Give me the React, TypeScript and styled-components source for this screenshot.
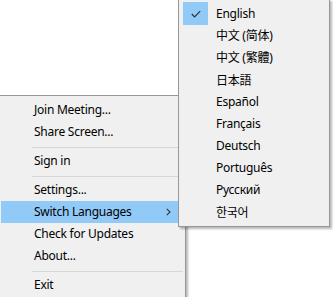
import React from "react";
import styled, { createGlobalStyle } from "styled-components";

const Global = createGlobalStyle`
  html, body { margin: 0; padding: 0; background: #ffffff; }
  body { font-family: "Noto Sans", "Noto Sans CJK SC", sans-serif; }
`;

const Stage = styled.div`
  position: relative;
  width: 336px;
  height: 297px;
  overflow: hidden;
  background: #ffffff;
`;

const Menu = styled.div<{ $left: number; $top: number; $width: number; $z: number }>`
  position: absolute;
  left: ${(p) => p.$left}px;
  top: ${(p) => p.$top}px;
  width: ${(p) => p.$width}px;
  z-index: ${(p) => p.$z};
  box-sizing: border-box;
  background: #f0f0f0;
  border: 1px solid #979797;
  padding: 3px 2px;
  display: flex;
  flex-direction: column;
  box-shadow: 2px 2px 2px rgba(0, 0, 0, 0.28);
`;

const Item = styled.div<{ $active?: boolean; $indent: number }>`
  height: 22px;
  display: flex;
  align-items: center;
  position: relative;
  padding-left: ${(p) => p.$indent}px;
  background: ${(p) => (p.$active ? "#91c9f7" : "transparent")};
  font-size: 12px;
  color: #000;
  white-space: nowrap;
`;

const Label = styled.span<{ $font?: string }>`
  font-family: ${(p) => p.$font ?? `"Noto Sans", sans-serif`};
  line-height: 22px;
  letter-spacing: -0.25px;
`;

const Arrow = styled.svg`
  position: absolute;
  right: 12px;
  top: 7px;
`;

const CheckBox = styled.div`
  position: absolute;
  left: 2px;
  top: -1px;
  width: 25px;
  height: 23px;
  background: #91c9f7;
  display: flex;
  align-items: center;
  justify-content: center;
`;

const Separator = styled.div`
  height: 7px;
  display: flex;
  align-items: flex-start;
  padding-top: 4px;
  box-sizing: border-box;
  padding-left: 31px;
  &::after {
    content: "";
    display: block;
    flex: 1;
    height: 1px;
    background: #d7d7d7;
  }
`;

type MainEntry = { sep: true } | { label: string; active?: boolean; sub?: boolean };

const mainItems: MainEntry[] = [
  { label: "Join Meeting..." },
  { label: "Share Screen..." },
  { sep: true },
  { label: "Sign in" },
  { sep: true },
  { label: "Settings..." },
  { label: "Switch Languages", active: true, sub: true },
  { label: "Check for Updates" },
  { label: "About..." },
  { sep: true },
  { label: "Exit" },
];

const cjkJP = `"Noto Sans CJK JP", "Noto Sans", sans-serif`;
const cjkKR = `"Noto Sans CJK KR", "Noto Sans", sans-serif`;

const langs: { label: string; font?: string; checked?: boolean }[] = [
  { label: "English", checked: true },
  { label: "中文 (简体)", font: `"Noto Sans", "Noto Sans CJK SC", sans-serif` },
  { label: "中文 (繁體)", font: `"Noto Sans", "Noto Sans CJK TC", sans-serif` },
  { label: "日本語", font: cjkJP },
  { label: "Español" },
  { label: "Français" },
  { label: "Deutsch" },
  { label: "Português" },
  { label: "Русский" },
  { label: "한국어", font: cjkKR },
];

export default function App() {
  return (
    <Stage>
      <Global />
      <Menu $left={-2} $top={95} $width={188} $z={1}>
        {mainItems.map((it, i) =>
          "sep" in it ? (
            <Separator key={i} />
          ) : (
            <Item key={i} $active={it.active} $indent={33}>
              <Label>{it.label}</Label>
              {it.sub && (
                <Arrow width="5" height="8" viewBox="0 0 5 8">
                  <path d="M0.8 0.8 L4 4 L0.8 7.2" fill="none" stroke="#333" strokeWidth="1.1" />
                </Arrow>
              )}
            </Item>
          )
        )}
      </Menu>
      <Menu $left={178} $top={-1} $width={152} $z={2}>
        {langs.map((l, i) => (
          <Item key={i} $indent={35}>
            {l.checked && (
              <CheckBox>
                <svg width="10" height="8" viewBox="0 0 10 8">
                  <path d="M0.8 4 L3.6 6.8 L9.2 1.2" fill="none" stroke="#333" strokeWidth="1.2" />
                </svg>
              </CheckBox>
            )}
            <Label $font={l.font}>{l.label}</Label>
          </Item>
        ))}
      </Menu>
    </Stage>
  );
}
